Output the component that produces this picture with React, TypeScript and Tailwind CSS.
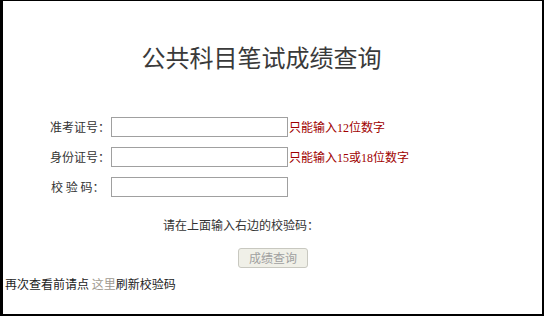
import React from "react";

const cjk = { fontFamily: '"Noto Sans CJK SC", "Liberation Sans", sans-serif' };

function Row({ label, hint }: { label: React.ReactNode; hint?: React.ReactNode }) {
  return (
    <div className="flex items-center h-[20px]">
      <div className="w-[60px] text-[12px] leading-[20px] text-[#333] whitespace-nowrap">{label}</div>
      <div className="w-[177px] h-[20px] border border-[#a0a0a0] bg-white ml-[1px]" />
      {hint && (
        <div className="text-[12px] leading-[20px] text-[#a00000] whitespace-nowrap ml-[1px]">{hint}</div>
      )}
    </div>
  );
}

export default function App() {
  return (
    <div
      className="w-[544px] h-[316px] bg-white border-black border-l-[3px] border-t-[1px] border-r-[2px] border-b-[2px] flex flex-col"
      style={cjk}
    >
      <div className="pt-[44px] pr-[22px] text-center text-[24px] leading-[24px] text-[#3a3a3a]">
        公共科目笔试成绩查询
      </div>
      <div className="mt-[48px] pl-[47px] flex flex-col gap-[10px]">
        <Row label="准考证号：" hint={<>只能输入<span style={{ fontFamily: '"Liberation Serif", serif' }}>12</span>位数字</>} />
        <Row label="身份证号：" hint={<>只能输入<span style={{ fontFamily: '"Liberation Serif", serif' }}>15</span>或<span style={{ fontFamily: '"Liberation Serif", serif' }}>18</span>位数字</>} />
        <Row label={<span className="pl-[1px]">校&nbsp;验&nbsp;码：</span>} />
      </div>
      <div className="mt-[21px] pl-[160px] text-[12px] leading-[14px] text-[#333]">请在上面输入右边的校验码：</div>
      <div className="mt-[16px] pl-[235px]">
        <div className="w-[70px] h-[20px] rounded-[3px] border border-[#c8c8c0] bg-[#f0f0e8] text-[12px] leading-[18px] text-[#a0a0a0] text-center">
          成绩查询
        </div>
      </div>
      <div className="mt-[9px] pl-[2px] text-[12px] leading-[14px] text-[#222]">
        再次查看前请点 <span className="text-[#a09a90]">这里</span>刷新校验码
      </div>
    </div>
  );
}
